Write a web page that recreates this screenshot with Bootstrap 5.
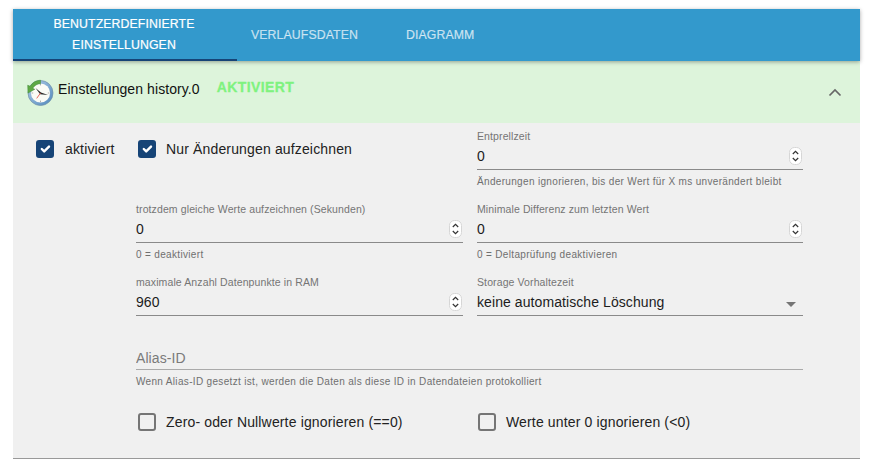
<!DOCTYPE html>
<html lang="de">
<head>
<meta charset="utf-8">
<title>Einstellungen history.0</title>
<link rel="stylesheet" href="https://cdn.jsdelivr.net/npm/bootstrap@5.3.0/dist/css/bootstrap.min.css">
<style>
html,body{height:100%;}
body{background:#fff;font-family:"Liberation Sans",Arial,sans-serif;color:#222;overflow:hidden;}
.shell{margin:9px 12px 0 13px;}
.tabbar{background:#3399cc;height:52px;box-shadow:0 1px 4px rgba(0,0,0,.35);position:relative;}
.tabbar .nav-link{color:rgba(255,255,255,.7);font-size:12.3px;letter-spacing:.1px;line-height:21px;text-transform:uppercase;padding:0;height:52px;display:flex;align-items:center;justify-content:center;text-align:center;font-weight:400;-webkit-text-stroke:.2px currentColor;}
.tabbar .nav-link.active{color:#fff;width:224px;border-bottom:2px solid #164477;padding:2px 2px 0 0;}
.tabbar .tab-two{margin-left:14px;margin-right:48px;}
.headrow{background:#ddf4db;height:62px;padding:0 18px 6px 13px;}
.headicon{position:relative;top:3px;}
.headtitle{font-size:14px;letter-spacing:.08px;margin-left:4px;color:#111;}
.headstate{font-size:14px;font-weight:700;letter-spacing:.42px;color:#7ff27f;margin-left:17px;position:relative;top:-2px;-webkit-text-stroke:.3px currentColor;}
.chev{position:relative;top:3px;}
.formarea{background:#f0f0f0;height:336px;border-bottom:1px solid #999;padding-top:6px;display:grid;grid-template-columns:109px 327px 326px;column-gap:14px;grid-template-rows:73px 73px 73px 60px 50px;align-content:start;}
.checkline{display:flex;align-items:center;font-size:14px;letter-spacing:.15px;color:#222;margin:0;height:28px;}
.checkline .form-check-input{width:18px;height:18px;margin:0 10px 0 0;border-radius:3px;border:2px solid #757575;background-color:transparent;flex:none;float:none;}
.checkline .form-check-input:checked{background-color:#164477;border-color:#164477;background-size:16px;}
.first-check{padding-left:23px;padding-top:6px;}
.first-check .form-check-input{margin-right:11px;}
.second-check{padding-left:2px;padding-top:6px;}
.fieldlabel{display:block;font-size:10.5px;letter-spacing:.11px;line-height:14px;color:#757575;margin:0;white-space:nowrap;}
.fieldbox{position:relative;height:27px;border-bottom:1px solid #8a8a8a;}
.fieldbox .form-control,.fieldbox .form-select{height:26px;border:0;border-radius:0;background-color:transparent;padding:0;font-size:14px;letter-spacing:.08px;color:#1c1c1c;box-shadow:none;line-height:26px;}
.fieldbox .form-select{background-image:url("data:image/svg+xml,%3Csvg xmlns='http://www.w3.org/2000/svg' width='10' height='5'%3E%3Cpath d='M0 0h10L5 5z' fill='%23757575'/%3E%3C/svg%3E");background-size:10px 5px;background-position:right 7px top 13px;}
.spinbox{position:absolute;right:1px;top:4px;width:13px;height:18px;}
.fieldhelp{font-size:10px;line-height:13px;color:#6f6f6f;margin-top:5px;letter-spacing:.33px;white-space:nowrap;}
.wide{grid-column:2 / 4;}
.aliasbox .fieldbox{height:22px;border-bottom-color:#aaa;}
.aliasbox .form-control{height:21px;line-height:21px;}
.aliasbox .form-control::placeholder{color:#7a7a7a;opacity:1;}
.lowcheck{padding-left:2px;}
.lowcheck.right{padding-left:1px;}
</style>
</head>
<body>
<div class="shell">
  <ul class="nav tabbar">
    <li class="nav-item"><a class="nav-link active" href="#">Benutzerdefinierte<br>Einstellungen</a></li>
    <li class="nav-item"><a class="nav-link tab-two" href="#">Verlaufsdaten</a></li>
    <li class="nav-item"><a class="nav-link" href="#">Diagramm</a></li>
  </ul>

  <div class="headrow d-flex align-items-center">
    <svg class="headicon" width="28" height="28" viewBox="0 0 28 28" aria-hidden="true">
      <defs>
        <linearGradient id="rim" x1="0" y1="0" x2="1" y2="1"><stop offset="0" stop-color="#b4d0ea"/><stop offset="1" stop-color="#4f86bb"/></linearGradient>
      </defs>
      <circle cx="14.5" cy="15" r="12.5" fill="url(#rim)" stroke="#6f8fa8" stroke-width=".7"/>
      <circle cx="14.5" cy="15" r="9.6" fill="#fbfbf6"/>
      <path d="M14.5 5.8v1.6M14.5 22.6v1.6M5.6 15h1.6M21.8 15h1.6" stroke="#9a9a9a" stroke-width=".8"/>
      <path d="M9.5 10l5.5 4.6 7 2.4-7.8-.8z" fill="#2a2a2a"/>
      <path d="M14.5 15l-3.8 5.4" stroke="#e2574c" stroke-width=".9"/>
      <path d="M14.5 2.2a12.8 12.8 0 0 0-10.4 6l-2.4-1L2 15.1l6.8-3.8-2.1-1a9.6 9.6 0 0 1 7.8-4.6z" fill="#5fa845" stroke="#3d8a33" stroke-width=".5"/>
    </svg>
    <span class="headtitle">Einstellungen history.0</span>
    <span class="headstate">AKTIVIERT</span>
    <svg class="chev ms-auto" width="14" height="9" viewBox="0 0 14 9" aria-hidden="true"><path d="M1.5 7.5 7 2l5.5 5.5" fill="none" stroke="#666" stroke-width="1.7"/></svg>
  </div>

  <form class="formarea">
    <div class="first-check">
      <label class="checkline"><input class="form-check-input" type="checkbox" checked>aktiviert</label>
    </div>
    <div class="second-check">
      <label class="checkline"><input class="form-check-input" type="checkbox" checked>Nur Änderungen aufzeichnen</label>
    </div>
    <div>
      <label class="fieldlabel">Entprellzeit</label>
      <div class="fieldbox">
        <input class="form-control" value="0">
        <svg class="spinbox" viewBox="0 0 13 18" aria-hidden="true"><rect x=".5" y=".5" width="12" height="17" rx="5" fill="#fff" stroke="#d6d6d6"/><path d="M3.8 7 6.5 4.3 9.2 7M3.8 11l2.7 2.7L9.2 11" fill="none" stroke="#333" stroke-width="1.2"/></svg>
      </div>
      <div class="fieldhelp">Änderungen ignorieren, bis der Wert für X ms unverändert bleibt</div>
    </div>

    <div></div>
    <div>
      <label class="fieldlabel">trotzdem gleiche Werte aufzeichnen (Sekunden)</label>
      <div class="fieldbox">
        <input class="form-control" value="0">
        <svg class="spinbox" viewBox="0 0 13 18" aria-hidden="true"><rect x=".5" y=".5" width="12" height="17" rx="5" fill="#fff" stroke="#d6d6d6"/><path d="M3.8 7 6.5 4.3 9.2 7M3.8 11l2.7 2.7L9.2 11" fill="none" stroke="#333" stroke-width="1.2"/></svg>
      </div>
      <div class="fieldhelp">0 = deaktiviert</div>
    </div>
    <div>
      <label class="fieldlabel">Minimale Differenz zum letzten Wert</label>
      <div class="fieldbox">
        <input class="form-control" value="0">
        <svg class="spinbox" viewBox="0 0 13 18" aria-hidden="true"><rect x=".5" y=".5" width="12" height="17" rx="5" fill="#fff" stroke="#d6d6d6"/><path d="M3.8 7 6.5 4.3 9.2 7M3.8 11l2.7 2.7L9.2 11" fill="none" stroke="#333" stroke-width="1.2"/></svg>
      </div>
      <div class="fieldhelp">0 = Deltaprüfung deaktivieren</div>
    </div>

    <div></div>
    <div>
      <label class="fieldlabel">maximale Anzahl Datenpunkte in RAM</label>
      <div class="fieldbox">
        <input class="form-control" value="960">
        <svg class="spinbox" viewBox="0 0 13 18" aria-hidden="true"><rect x=".5" y=".5" width="12" height="17" rx="5" fill="#fff" stroke="#d6d6d6"/><path d="M3.8 7 6.5 4.3 9.2 7M3.8 11l2.7 2.7L9.2 11" fill="none" stroke="#333" stroke-width="1.2"/></svg>
      </div>
    </div>
    <div>
      <label class="fieldlabel">Storage Vorhaltezeit</label>
      <div class="fieldbox">
        <select class="form-select"><option>keine automatische Löschung</option></select>
      </div>
    </div>

    <div></div>
    <div class="wide aliasbox">
      <div class="fieldbox"><input class="form-control" placeholder="Alias-ID"></div>
      <div class="fieldhelp">Wenn Alias-ID gesetzt ist, werden die Daten als diese ID in Datendateien protokolliert</div>
    </div>

    <div></div>
    <div class="lowcheck">
      <label class="checkline"><input class="form-check-input" type="checkbox">Zero- oder Nullwerte ignorieren (==0)</label>
    </div>
    <div class="lowcheck right">
      <label class="checkline"><input class="form-check-input" type="checkbox">Werte unter 0 ignorieren (&lt;0)</label>
    </div>
  </form>
</div>
<script src="https://cdn.jsdelivr.net/npm/bootstrap@5.3.0/dist/js/bootstrap.bundle.min.js"></script>
</body>
</html>
